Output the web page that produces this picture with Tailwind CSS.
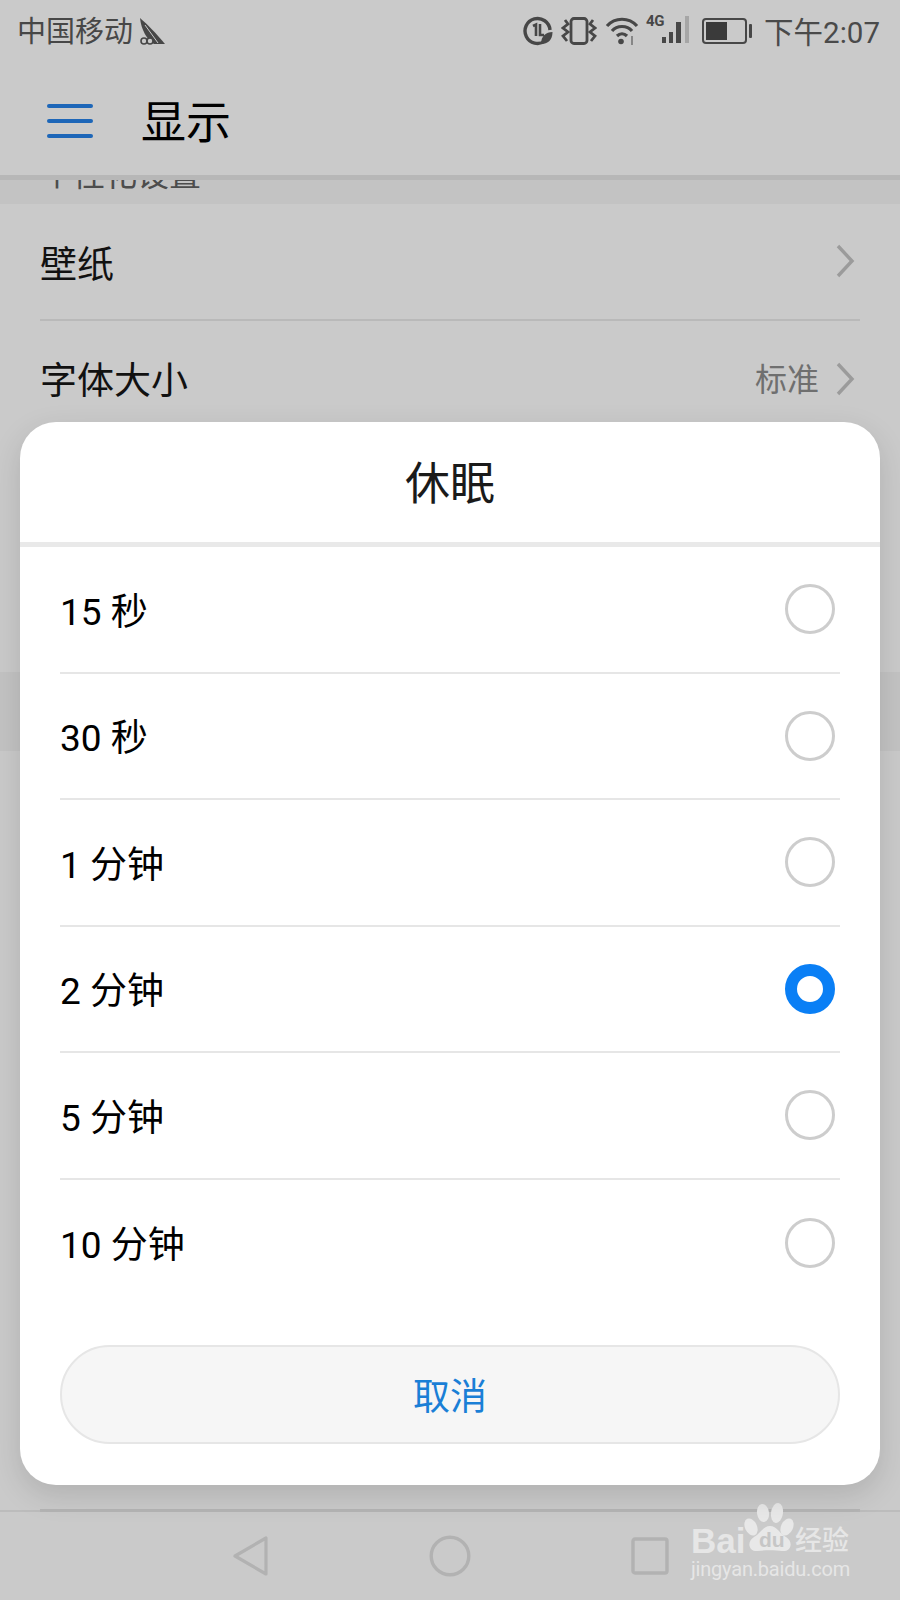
<!DOCTYPE html>
<html lang="zh">
<head>
<meta charset="UTF-8">
<meta name="viewport" content="width=device-width, initial-scale=1">
<title>显示</title>
<script src="https://cdn.jsdelivr.net/npm/@tailwindcss/browser@4"></script>
</head>
<body class="m-0">
<div class="relative w-[900px] h-[1600px] overflow-hidden bg-[#cacaca] font-['Roboto','Noto_Sans_CJK_SC',sans-serif]">

    <!-- status bar -->
    <div class="h-[62px] flex items-center justify-between pl-[17px] pr-[20px] text-[#474747] text-[29px]">
        <div class="flex items-center gap-[5px]">
            <span class="pt-[4px]">中国移动</span>
            <svg width="28" height="30" viewBox="0 0 28 30" fill="#474747">
                <path d="M2 2 C9 8 18 17 27 28 L16 28 C9 24 3 13 2 2Z"/>
                <path d="M7 9 L20 27" stroke="#cacaca" stroke-width="1"/>
                <circle cx="6" cy="25" r="3" fill="#cacaca" stroke="#474747" stroke-width="1.6"/>
                <circle cx="12" cy="25" r="3" fill="#cacaca" stroke="#474747" stroke-width="1.6"/>
            </svg>
        </div>
        <div class="flex items-center">
            <svg width="30" height="30" viewBox="0 0 30 30" class="mr-[8px]">
                <path d="M22 25 A12.5 12.5 0 1 1 27 14" fill="none" stroke="#474747" stroke-width="3.4"/>
                <path d="M10 10 L13 8.5 V20 M17 8 V19 H21" fill="none" stroke="#474747" stroke-width="2.6"/>
                <path d="M18 28 C18 20 23 16 29.5 16 C29.5 24 25 28 18 28Z" fill="#474747"/>
            </svg>
            <svg width="36" height="30" viewBox="0 0 36 30" class="mr-[8px]" fill="none" stroke="#474747">
                <rect x="10" y="2.5" width="16" height="25" rx="3" stroke-width="2.8"/>
                <path d="M4 4 L7 8 L2 12 L7 16 L2 20 L6 25 M32 4 L29 8 L34 12 L29 16 L34 20 L30 25" stroke-width="2.8"/>
            </svg>
            <svg width="34" height="30" viewBox="0 0 34 30" class="mr-[7px]" fill="none" stroke="#474747" stroke-width="3.2">
                <path d="M2 10 C10 1 24 1 32 10"/>
                <path d="M7 15 C12 9 22 9 27 15"/>
                <path d="M12 20 C15 17 19 17 22 20"/>
                <circle cx="16" cy="25.5" r="2.8" fill="#474747" stroke="none"/>
                <path d="M27 20 V29" stroke-width="1.4" stroke="#6a6a6a"/>
            </svg>
            <div class="relative w-[44px] h-[30px] mr-[12px]">
                <span class="absolute left-0 top-[-3px] text-[15px] font-bold leading-[16px] tracking-[-0.5px] text-[#474747]">4G</span>
                <svg width="44" height="30" viewBox="0 0 44 30" fill="#474747">
                    <rect x="16" y="21" width="4" height="6"/>
                    <rect x="23" y="16" width="4" height="11"/>
                    <rect x="30" y="6" width="5" height="21"/>
                    <rect x="39" y="0" width="4" height="27" fill="#a6a6a6"/>
                </svg>
            </div>
            <div class="flex items-center mr-[12px]">
                <div class="w-[45px] h-[26px] border-2 border-[#474747] rounded-[4px] p-[2px]">
                    <div class="w-[21px] h-full bg-[#3a3a3a]"></div>
                </div>
                <div class="w-[3px] h-[14px] bg-[#474747] rounded-[1px] ml-[2px]"></div>
            </div>
            <span class="pt-[4px] text-[#4a4a4a] text-[29.5px]">下午2:07</span>
        </div>
    </div>

    <!-- title bar -->
    <div class="h-[113px] flex items-center pl-[47px] pt-[4px]">
        <div class="w-[46px] flex flex-col gap-[11px]">
            <div class="h-[4px] rounded-full bg-[#1d66b8]"></div>
            <div class="h-[4px] rounded-full bg-[#1d66b8]"></div>
            <div class="h-[4px] rounded-full bg-[#1d66b8]"></div>
        </div>
        <h1 class="ml-[48px] pt-[6px] text-[45px] leading-none text-black font-normal">显示</h1>
    </div>
    <div class="h-[5px] bg-[#b7b7b7]"></div>

    <!-- section band, heading scrolled under the title bar -->
    <div class="h-[24px] bg-[#c3c3c3] overflow-hidden pl-[41px]">
        <p class="mt-[-25px] text-[32px] leading-[40px] text-[#4d4d4d]">个性化设置</p>
    </div>

    <!-- settings behind the dialog -->
    <div class="mx-[40px] h-[117px] flex items-center justify-between border-b-2 border-[#b9b9b9] pb-[2px]">
        <span class="pt-[10px] text-[37px] text-[#111]">壁纸</span>
        <svg width="20" height="34" viewBox="0 0 20 34" fill="none" stroke="#9b9b9b" stroke-width="3.4" class="mr-[5px]"><path d="M3 2 L17 17 L3 32"/></svg>
    </div>
    <div class="mx-[40px] h-[116px] flex items-center justify-between">
        <span class="pt-[6px] text-[37px] text-[#111]">字体大小</span>
        <div class="flex items-center gap-[16px]">
            <span class="pt-[2px] text-[32px] text-[#6f6f6f]">标准</span>
            <svg width="20" height="34" viewBox="0 0 20 34" fill="none" stroke="#9b9b9b" stroke-width="3.4" class="mr-[5px]"><path d="M3 2 L17 17 L3 32"/></svg>
        </div>
    </div>
    <div class="mt-[235px] h-[79px] bg-[#c3c3c3]"></div>

    <!-- bottom navigation -->
    <div class="absolute left-0 right-0 bottom-0 h-[90px]">
        <div class="h-[2px] bg-[#bcbcbc] relative">
            <div class="absolute left-[40px] right-[40px] bottom-0 h-[3px] bg-[#b4b4b4]"></div>
        </div>
        <div class="h-[88px] flex items-center gap-[160px] pl-[232px]">
            <svg width="37" height="42" viewBox="0 0 37 42" fill="none" stroke="#b2b2b2" stroke-width="3.2" stroke-linejoin="round"><path d="M34 3 V39 L3 21Z"/></svg>
            <svg width="42" height="42" viewBox="0 0 42 42" fill="none" stroke="#b2b2b2" stroke-width="3.4"><circle cx="21" cy="21" r="18.8"/></svg>
            <svg width="38" height="38" viewBox="0 0 38 38" fill="none" stroke="#b2b2b2" stroke-width="3.4"><rect x="2" y="2" width="34" height="34" rx="2"/></svg>
        </div>
    </div>

    <!-- baidu watermark -->
    <div class="absolute left-[691px] top-[1502px] w-[165px] h-[82px] text-[#e6e6e6]">
        <span class="absolute left-0 top-[19px] text-[35px] leading-[40px] font-bold font-['Liberation_Sans',sans-serif]">Bai</span>
        <svg class="absolute left-[44px] top-0" width="62" height="58" viewBox="0 0 62 58" fill="#e8e8e8">
            <ellipse cx="28" cy="11" rx="6" ry="9" transform="rotate(-8 28 11)"/>
            <ellipse cx="42" cy="11" rx="6" ry="10" transform="rotate(8 42 11)"/>
            <ellipse cx="16" cy="25" rx="6" ry="9" transform="rotate(-25 16 25)"/>
            <ellipse cx="52" cy="25" rx="6" ry="9" transform="rotate(25 52 25)"/>
            <path d="M35 24 C42 24 44 31 51 35 C59 40 56 50 47 49 C41 48 29 48 23 49 C14 50 11 40 19 35 C26 31 28 24 35 24Z"/>
        </svg>
        <span class="absolute left-[68px] top-[26px] text-[21px] leading-[24px] font-bold text-[#c6c6c6] font-['Liberation_Sans',sans-serif]">du</span>
        <span class="absolute left-[104px] top-[24px] text-[27px] leading-[30px] font-medium">经验</span>
        <span class="absolute left-0 top-[55px] text-[20px] leading-[24px] tracking-[-0.2px]">jingyan.baidu.com</span>
    </div>

    <!-- dialog -->
    <div class="absolute left-[20px] top-[422px] w-[860px] h-[1063px] bg-white rounded-[36px] shadow-[0_10px_30px_rgba(0,0,0,0.13)]">
        <div class="h-[125px] flex items-center justify-center border-b-[5px] border-[#e9e9e9] pb-[4px]">
            <h2 class="pt-[9px] text-[45px] leading-none font-normal text-[#1a1a1a]">休眠</h2>
        </div>
        <ul class="px-[40px]">
            <li class="h-[126.5px] flex items-center justify-between border-b-2 border-[#e6e6e6] text-[37px] text-black"><span class="pt-[6px]">15 秒</span><span class="w-[50px] h-[50px] rounded-full border-[3px] border-[#cdcdcd] mr-[5px]"></span></li>
            <li class="h-[126.5px] flex items-center justify-between border-b-2 border-[#e6e6e6] text-[37px] text-black"><span class="pt-[6px]">30 秒</span><span class="w-[50px] h-[50px] rounded-full border-[3px] border-[#cdcdcd] mr-[5px]"></span></li>
            <li class="h-[126.5px] flex items-center justify-between border-b-2 border-[#e6e6e6] text-[37px] text-black"><span class="pt-[6px]">1 分钟</span><span class="w-[50px] h-[50px] rounded-full border-[3px] border-[#cdcdcd] mr-[5px]"></span></li>
            <li class="h-[126.5px] flex items-center justify-between border-b-2 border-[#e6e6e6] text-[37px] text-black"><span class="pt-[6px]">2 分钟</span><span class="w-[50px] h-[50px] rounded-full border-[12px] border-[#0a7ff5] mr-[5px]"></span></li>
            <li class="h-[126.5px] flex items-center justify-between border-b-2 border-[#e6e6e6] text-[37px] text-black"><span class="pt-[6px]">5 分钟</span><span class="w-[50px] h-[50px] rounded-full border-[3px] border-[#cdcdcd] mr-[5px]"></span></li>
            <li class="h-[126.5px] flex items-center justify-between text-[37px] text-black"><span class="pt-[6px]">10 分钟</span><span class="w-[50px] h-[50px] rounded-full border-[3px] border-[#cdcdcd] mr-[5px]"></span></li>
        </ul>
        <div class="px-[40px] mt-[39px]">
            <button class="w-full h-[99px] rounded-full bg-[#f6f6f6] border-2 border-[#e6e6e6] pt-[6px] text-[37px] text-[#1a7fd6]">取消</button>
        </div>
    </div>
</div>
</body>
</html>
